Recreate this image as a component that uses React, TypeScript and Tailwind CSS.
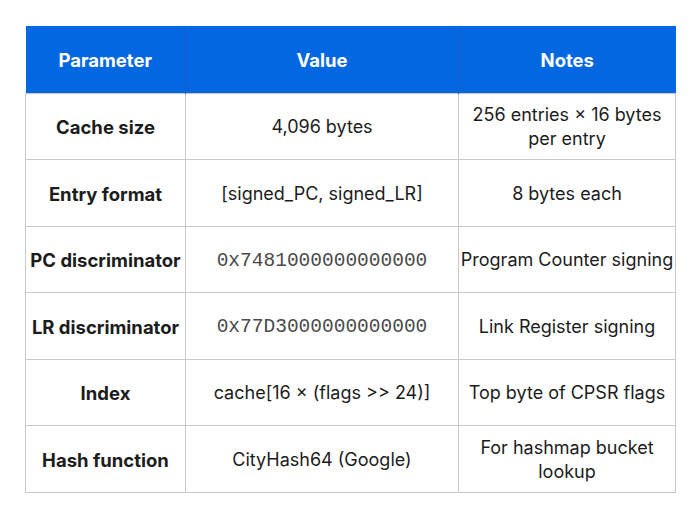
const rows: { param: string; value: string; mono?: boolean; notes: string }[] = [
  { param: "Cache size", value: "4,096 bytes", notes: "256 entries × 16 bytes per entry" },
  { param: "Entry format", value: "[signed_PC, signed_LR]", notes: "8 bytes each" },
  { param: "PC discriminator", value: "0x7481000000000000", mono: true, notes: "Program Counter signing" },
  { param: "LR discriminator", value: "0x77D3000000000000", mono: true, notes: "Link Register signing" },
  { param: "Index", value: "cache[16 × (flags >> 24)]", notes: "Top byte of CPSR flags" },
  { param: "Hash function", value: "CityHash64 (Google)", notes: "For hashmap bucket lookup" },
];

export default function App() {
  return (
    <div className="w-[700px] h-[515px] bg-white pt-[26px] pl-[25px] font-['Inter','Liberation_Sans',sans-serif] text-[#1c1c1c]">
      <table className="w-[650px] border-collapse table-fixed text-center text-[18px] leading-[24px]">
        <colgroup>
          <col className="w-[160px]" />
          <col className="w-[273px]" />
          <col className="w-[217px]" />
        </colgroup>
        <thead>
          <tr className="h-[67px] bg-[#0467e2] text-white text-[18.5px]">
            <th className="font-bold border-r border-[#1d5bc4] pt-0.5">Parameter</th>
            <th className="font-bold border-r border-[#1d5bc4] pt-0.5">Value</th>
            <th className="font-bold pt-0.5">Notes</th>
          </tr>
        </thead>
        <tbody>
          {rows.map((r) => (
            <tr key={r.param} className="h-[66.5px]">
              <td className="border border-[#c9c9c9] font-bold text-[18.5px] px-0 pt-0.5 whitespace-nowrap">{r.param}</td>
              <td className="border border-[#c9c9c9] px-2 pt-0.5">
                {r.mono ? (
                  <span className="font-['Liberation_Mono',monospace] text-[19.5px] text-[#4a4a4a]">{r.value}</span>
                ) : (
                  r.value
                )}
              </td>
              <td className="border border-[#c9c9c9] px-0 pt-0.5">{r.notes}</td>
            </tr>
          ))}
        </tbody>
      </table>
    </div>
  );
}
